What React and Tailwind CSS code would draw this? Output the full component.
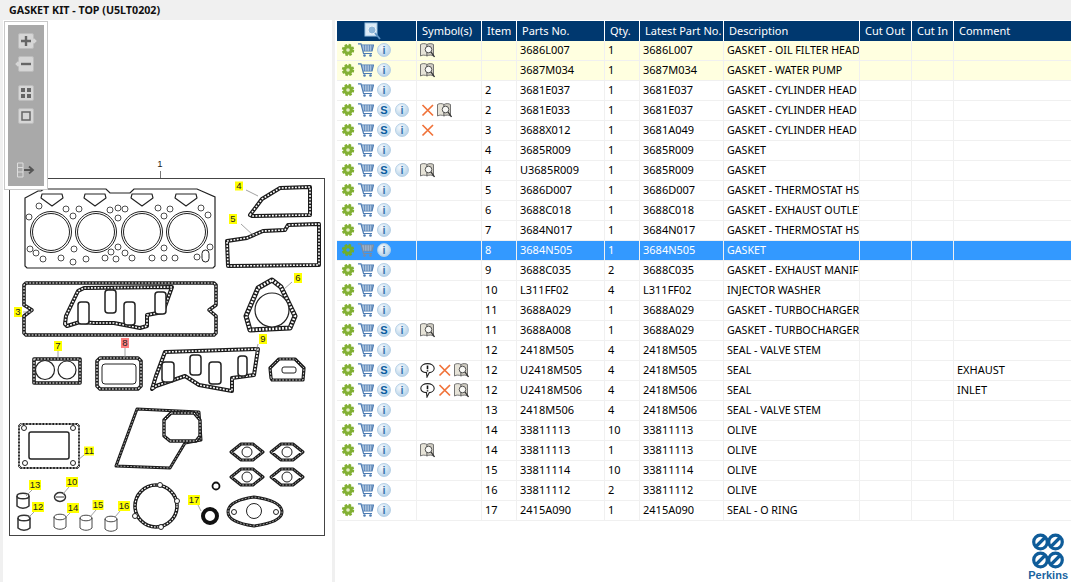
import React from "react";

const rows = [
  { s: 0, sym: ["book"], item: "", part: "3686L007", qty: "1", latest: "3686L007", desc: "GASKET - OIL FILTER HEAD", hl: true },
  { s: 0, sym: ["book"], item: "", part: "3687M034", qty: "1", latest: "3687M034", desc: "GASKET - WATER PUMP", hl: true },
  { s: 0, sym: [], item: "2", part: "3681E037", qty: "1", latest: "3681E037", desc: "GASKET - CYLINDER HEAD" },
  { s: 1, sym: ["x", "book"], item: "2", part: "3681E033", qty: "1", latest: "3681E037", desc: "GASKET - CYLINDER HEAD" },
  { s: 1, sym: ["x"], item: "3", part: "3688X012", qty: "1", latest: "3681A049", desc: "GASKET - CYLINDER HEAD" },
  { s: 0, sym: [], item: "4", part: "3685R009", qty: "1", latest: "3685R009", desc: "GASKET" },
  { s: 1, sym: ["book"], item: "4", part: "U3685R009", qty: "1", latest: "3685R009", desc: "GASKET" },
  { s: 0, sym: [], item: "5", part: "3686D007", qty: "1", latest: "3686D007", desc: "GASKET - THERMOSTAT HSG" },
  { s: 0, sym: [], item: "6", part: "3688C018", qty: "1", latest: "3688C018", desc: "GASKET - EXHAUST OUTLET" },
  { s: 0, sym: [], item: "7", part: "3684N017", qty: "1", latest: "3684N017", desc: "GASKET - THERMOSTAT HSG" },
  { s: 0, sym: [], item: "8", part: "3684N505", qty: "1", latest: "3684N505", desc: "GASKET", sel: true },
  { s: 0, sym: [], item: "9", part: "3688C035", qty: "2", latest: "3688C035", desc: "GASKET - EXHAUST MANIFOLD" },
  { s: 0, sym: [], item: "10", part: "L311FF02", qty: "4", latest: "L311FF02", desc: "INJECTOR WASHER" },
  { s: 0, sym: [], item: "11", part: "3688A029", qty: "1", latest: "3688A029", desc: "GASKET - TURBOCHARGER" },
  { s: 1, sym: ["book"], item: "11", part: "3688A008", qty: "1", latest: "3688A029", desc: "GASKET - TURBOCHARGER" },
  { s: 0, sym: [], item: "12", part: "2418M505", qty: "4", latest: "2418M505", desc: "SEAL - VALVE STEM" },
  { s: 1, sym: ["note", "x", "book"], item: "12", part: "U2418M505", qty: "4", latest: "2418M505", desc: "SEAL", comment: "EXHAUST" },
  { s: 1, sym: ["note", "x", "book"], item: "12", part: "U2418M506", qty: "4", latest: "2418M506", desc: "SEAL", comment: "INLET" },
  { s: 0, sym: [], item: "13", part: "2418M506", qty: "4", latest: "2418M506", desc: "SEAL - VALVE STEM" },
  { s: 0, sym: [], item: "14", part: "33811113", qty: "10", latest: "33811113", desc: "OLIVE" },
  { s: 0, sym: ["book"], item: "14", part: "33811113", qty: "1", latest: "33811113", desc: "OLIVE" },
  { s: 0, sym: [], item: "15", part: "33811114", qty: "10", latest: "33811114", desc: "OLIVE" },
  { s: 0, sym: [], item: "16", part: "33811112", qty: "2", latest: "33811112", desc: "OLIVE" },
  { s: 0, sym: [], item: "17", part: "2415A090", qty: "1", latest: "2415A090", desc: "SEAL - O RING" },
];

const labels = [
  ["4", 239, 186, 8, 9], ["5", 233, 219, 8, 10], ["6", 298, 278, 8, 10], ["3", 18, 312, 8, 10],
  ["7", 58, 346, 8, 10], ["8", 125, 343, 8, 10], ["9", 263, 339, 8, 10], ["11", 89, 451, 10, 9],
  ["13", 35, 485, 12, 10], ["10", 72, 482, 12, 10], ["12", 38, 507, 12, 10], ["14", 73, 508, 12, 10],
  ["15", 98, 505, 11, 10], ["16", 124, 506, 12, 10], ["17", 194, 500, 12, 10],
];

const leaders = [
  "M246 190L258 196", "M241 224L254 236", "M292 282L283 290", "M23 312L32 312", "M58 351V358", "M125 348V358",
  "M258 344L256 352", "M84 455L78 460", "M32 490L26 496", "M69 487L63 494", "M34 512L28 518", "M70 513L65 518",
  "M96 510L90 517", "M120 511L115 517", "M198 505L201 511",
];

function Gear({ sel }) {
  const c = sel ? "#6fae2e" : "#82b034";
  return (
    <svg width="14" height="14" viewBox="0 0 14 14" className="shrink-0">
      <circle cx="7" cy="7" r="5" fill="none" stroke={c} strokeWidth="2.400" strokeDasharray="2.400 1.530" />
      <circle cx="7" cy="7" r="4.800" fill={c} />
      <circle cx="7" cy="7" r="1.800" fill={sel ? "#3399ff" : "#e4eec4"} />
    </svg>
  );
}

function Cart({ sel }) {
  const c = sel ? "#7d8ca0" : "#4d7cb3";
  return (
    <svg width="16" height="14" viewBox="0 0 16 14" className="shrink-0" fill="none">
      <path d="M3.500 2H15.500L14 8H5Z" fill={sel ? "#a9c4e0" : "#dbe6f2"} />
      <path d="M6.500 2V8M9 2V8M11.500 2V8M13.800 2V8M4 4H15M4.500 6H14.500" stroke={c} strokeWidth="0.700" />
      <path d="M0 0.800H3L5.500 10.500H14M3.500 2H15.500L14 8H5" stroke={c} strokeWidth="1.200" />
      <circle cx="6.500" cy="12.500" r="1.300" fill={c} />
      <circle cx="12.500" cy="12.500" r="1.300" fill={c} />
    </svg>
  );
}

function Round({ children, color }) {
  return (
    <span className="w-[14px] h-[14px] shrink-0 rounded-full bg-[radial-gradient(circle_at_35%_30%,#f6fafd,#a5c8e4)] border border-[#b5d0e6] flex items-center justify-center font-bold text-[11px] leading-none [font-family:'Liberation_Sans',sans-serif]" style={{ color }}>
      {children}
    </span>
  );
}

function Book() {
  return (
    <svg width="15" height="15" viewBox="0 0 15 15" className="shrink-0" fill="none">
      <path d="M0.500 1.500C2.500 0.300 5 0.300 7 1.500V13C5 11.800 2.500 11.800 0.500 13Z" fill="#e6e3d8" stroke="#666" strokeWidth="0.900" />
      <path d="M7 1.500C9 0.300 11.500 0.300 13.500 1.500V13C11.500 11.800 9 11.800 7 13Z" fill="#cfccc2" stroke="#666" strokeWidth="0.900" />
      <circle cx="8.500" cy="6.500" r="3.300" fill="#f8f8f5" stroke="#444" strokeWidth="0.900" />
      <path d="M11 9L14.500 14" stroke="#333" strokeWidth="1.300" />
    </svg>
  );
}

function Cross() {
  return (
    <svg width="15" height="15" viewBox="0 0 15 15" className="shrink-0" fill="none">
      <path d="M2.500 2L13 12.500M13 2L2.500 12.500" stroke="#f0733a" strokeWidth="1.700" />
    </svg>
  );
}

function Note() {
  return (
    <svg width="15" height="15" viewBox="0 0 15 15" className="shrink-0" fill="none">
      <path d="M7.500 0.600C11 0.600 14.200 2.400 14.200 5.200C14.200 8 11.500 9.500 9.300 9.600L7 14L6.500 9.600C3.700 9.400 0.800 8 0.800 5.200C0.800 2.400 4 0.600 7.500 0.600Z" fill="#fff" stroke="#222" strokeWidth="1.100" />
      <path d="M7.500 2.600V6.200M7.500 7.200V8.600" stroke="#111" strokeWidth="1.600" />
    </svg>
  );
}

function ToolBtn({ children, className, notch }) {
  return (
    <span className={"relative w-4 h-4 ml-[10px] flex items-center justify-center rounded-[2px] border border-[#bdbdbd] bg-[#d6d6d6] " + (className || "")}>
      {children}
      {notch === "right" && <span className="absolute right-[-3px] top-[5px] w-[4px] h-[4px] rotate-45 bg-[#d6d6d6]" />}
      {notch === "left" && <span className="absolute left-[-3px] top-[5px] w-[4px] h-[4px] rotate-45 bg-[#d6d6d6]" />}
    </span>
  );
}

function Gasket({ d, w = 3.6, fill = "none" }) {
  return (
    <g fill={fill} strokeLinejoin="round">
      <path d={d} stroke="#1c1c1c" strokeWidth={w} />
      <path d={d} stroke="#fff" strokeWidth={w - 2.400} strokeDasharray="1.800 1.500" fill="none" />
    </g>
  );
}

function Diagram() {
  const headHoles = [
    [39, 206], [29, 217], [66, 209], [79, 209], [73, 216], [110, 210], [118, 208], [125, 209], [118, 218],
    [158, 208], [170, 209], [164, 216], [201, 208], [208, 215], [30, 249], [36, 253], [43, 259], [61, 258], [73, 262],
    [74, 249], [86, 259], [105, 258], [111, 252], [116, 259], [118, 247], [125, 253], [132, 258], [152, 258], [164, 258], [175, 258],
    [164, 248], [197, 257], [210, 247],
  ];
  const diamonds = [[247, 452], [287, 452], [247, 477], [287, 477]];
  const corners = [[24, 428], [73, 428], [25, 463], [73, 463]];
  return (
    <svg viewBox="3 20 329 562" width="329" height="562" className="block" fill="none">
      <rect x="9.500" y="178.500" width="315" height="357" stroke="#444" />
      <path d="M160.500 171V178" stroke="#777" />
      <text x="160" y="167" textAnchor="middle" fontSize="9.500" fill="#222" fontFamily="Liberation Sans, sans-serif">1</text>

      {/* head gasket */}
      <path d="M25 198L38 191H41L44 189H106L110 193H130L134 189H197L215 197V266L213 268H27L25 266Z" stroke="#222" strokeWidth="1.200" />
      {[[51, 232], [96, 232], [142, 232], [187, 232]].map(([x, y]) => (
        <g key={x} stroke="#222">
          <circle cx={x} cy={y} r="20.500" strokeWidth="1" />
          <circle cx={x} cy={y} r="18.500" strokeWidth="1" />
        </g>
      ))}
      {[52, 95, 142, 186].map((x) => (
        <path key={x} d={`M${x - 10} 194H${x + 10}L${x + 11} 198L${x} 206L${x - 11} 198Z`} stroke="#222" strokeWidth="1.100" strokeLinejoin="round" />
      ))}
      {headHoles.map(([x, y]) => (
        <circle key={x + "-" + y} cx={x} cy={y} r="3" stroke="#222" strokeWidth="0.800" />
      ))}
      <rect x="202" y="250" width="7" height="12" rx="3.500" stroke="#222" />

      {/* 3 */}
      <Gasket d="M26 283H214L216 285V305L209 310L216 316V333L214 335H26L24 333V316L32 310L24 305V285Z" />
      <Gasket d="M65 324L66 316L78 291L84 288L172 287L163 312L147 315L147 326L140 328L114 323L94 323L80 322L67 326Z" w={4} />
      {[[78, 302, 11, 22], [105, 290, 11, 23], [124, 302, 11, 23], [155, 292, 11, 22]].map(([x, y, w, h]) => (
        <rect key={x} x={x} y={y} width={w} height={h} rx="3" stroke="#222" strokeWidth="1.500" fill="#fff" />
      ))}

      {/* 4, 5, 6 */}
      <Gasket d="M250 215L262 199L280 188L310 187V215L252 216Z" w={4} />
      <Gasket d="M227 241L247 238L263 231L285 230L288 225L319 224V265L228 266Z" w={4} />
      <Gasket d="M272 280L281 287L295 316L290 328L250 330L246 316L258 288Z" w={5} />
      <circle cx="272" cy="310" r="17" stroke="#222" strokeWidth="1.200" fill="#fff" />

      {/* 7, 8, 9, small flange */}
      <Gasket d="M34 359H80V383H34Z" w={3.600} />
      <circle cx="45" cy="370" r="9.500" stroke="#222" strokeWidth="1.200" fill="#fff" />
      <circle cx="67" cy="370" r="9" stroke="#222" strokeWidth="1.200" fill="#fff" />
      <Gasket d="M100 358H138L141 361V386L138 389H100L97 386V361Z" />
      <rect x="102" y="364" width="34" height="20" rx="3" stroke="#222" />
      <Gasket d="M152 389L156 376L165 352L258 349L254 375L232 378L232 391L199 385L185 376L156 386Z" w={4} />
      {[[162, 362, 12, 20], [190, 355, 11, 20], [209, 362, 12, 22], [238, 356, 9, 20]].map(([x, y, w, h]) => (
        <rect key={x} x={x} y={y} width={w} height={h} rx="3" stroke="#222" strokeWidth="1.500" fill="#fff" />
      ))}
      <Gasket d="M271 378L270 368L279 359H295L304 368L303 380H272Z" w={3.200} />
      <rect x="282" y="367" width="14" height="6" rx="2" stroke="#222" fill="#fff" />

      {/* 11 and big turbo gasket */}
      <Gasket d="M21 424H77L79 426V466L77 468H21L19 466V426Z" w={1.800} />
      <rect x="29" y="432" width="40" height="27" rx="2" stroke="#222" strokeWidth="1.500" />
      {corners.map(([x, y]) => (
        <circle key={x + "-" + y} cx={x} cy={y} r="2.500" stroke="#222" fill="#fff" />
      ))}
      <Gasket d="M116 466L137 409L199 412L201 440L185 443L170 468Z" w={3} />
      <Gasket d="M171 413H194L200 420V436L196 441H170L164 436V420Z" w={3.400} fill="#fff" />

      {/* diamonds */}
      {diamonds.map(([x, y]) => (
        <g key={x + "-" + y}>
          <Gasket d={`M${x - 16} ${y}L${x - 6} ${y - 8}H${x + 6}L${x + 16} ${y}L${x + 6} ${y + 8}H${x - 6}Z`} w={3} />
          <circle cx={x} cy={y} r="5" stroke="#222" fill="#fff" />
        </g>
      ))}

      {/* flange, round gasket, o rings */}
      <Gasket d="M228 512C228 503 240 499 254 497C268 499 282 503 282 512C282 520 268 524 254 526C240 524 228 520 228 512Z" w={3} />
      <circle cx="254" cy="511" r="7.500" stroke="#222" fill="#fff" />
      <circle cx="234" cy="512" r="2.500" stroke="#222" />
      <circle cx="276" cy="512" r="2.500" stroke="#222" />
      <circle cx="156" cy="506" r="21" stroke="#1c1c1c" strokeWidth="3.600" />
      <circle cx="156" cy="506" r="21" stroke="#fff" strokeWidth="1.200" strokeDasharray="1.800 1.500" />
      {[[160, 485], [177, 501], [135, 516], [161, 527]].map(([x, y]) => (
        <circle key={x} cx={x} cy={y} r="2.500" stroke="#222" fill="#fff" />
      ))}
      <circle cx="216" cy="486" r="3.500" stroke="#111" strokeWidth="1.800" />
      <circle cx="210" cy="516" r="7" stroke="#111" strokeWidth="4" />

      {/* seals and olives */}
      {[[23, 501, 1], [24, 523, 1], [60, 522, 0], [86, 523, 0], [111, 524, 0]].map(([x, y, dark]) => (
        <g key={x} stroke="#333" strokeWidth={dark ? 1.500 : 0.900}>
          <path d={`M${x - 6} ${y - 5}V${y + 5}C${x - 3} ${y + 8} ${x + 3} ${y + 8} ${x + 6} ${y + 5}V${y - 5}`} />
          <ellipse cx={x} cy={y - 5} rx="6" ry="2.800" />
        </g>
      ))}
      <ellipse cx="60" cy="497" rx="5.500" ry="4.500" stroke="#333" strokeWidth="1.500" />
      <path d="M56 497H64" stroke="#333" />

      {leaders.map((d) => (
        <path key={d} d={d} stroke="#8a8a8a" strokeWidth="0.800" />
      ))}
      {labels.map(([t, x, y, w, h]) => (
        <g key={t + x}>
          <rect x={x - w / 2} y={y - h / 2} width={w} height={h} fill={t === "8" ? "#ff8080" : "#ffff00"} />
          <text x={x} y={y + 3.300} textAnchor="middle" fontSize="9.500" fill="#222" fontFamily="Liberation Sans, sans-serif">{t}</text>
        </g>
      ))}
    </svg>
  );
}

function Logo() {
  const c = "#0f5c99";
  return (
    <div className="self-end mr-[3px] flex flex-col items-center">
      <svg width="34" height="36" viewBox="0 0 34 36" fill="none">
        {[[9.500, 9], [24.500, 9], [9.500, 27], [24.500, 27]].map(([x, y]) => (
          <g key={x + "-" + y} stroke={c} strokeWidth="3.200">
            <circle cx={x} cy={y} r="6.800" />
            <path d={`M${x - 4.500} ${y + 4.500}L${x + 4.500} ${y - 4.500}`} />
          </g>
        ))}
      </svg>
      <span className="text-[11px] leading-[13px] font-bold text-[#1a649f] [font-family:'Liberation_Sans',sans-serif]">Perkins</span>
    </div>
  );
}

export default function App() {
  const cell = "p-0 border-b border-r border-[#f0f0f0]";
  return (
    <div className="w-[1071px] h-[582px] overflow-hidden bg-[#f0f0f0] flex flex-col text-[11px] text-black [font-family:'Noto_Sans',sans-serif]">
      <div className="h-5 shrink-0 pl-[9px] font-bold text-[10.700px] leading-5 text-[#111]">GASKET KIT - TOP (U5LT0202)</div>
      <div className="flex flex-1 min-h-0">
        <div className="relative ml-[3px] w-[329px] bg-white">
          <Diagram />
          <div className="absolute left-[1px] top-[1px] w-[44px] h-[169px] border border-[#c8c8c8] bg-white p-[3px]">
            <div className="h-full bg-[#a9a9a9] flex flex-col pt-[8px]">
              <ToolBtn notch="right">
                <svg width="12" height="12" viewBox="0 0 12 12"><path d="M6 1V11M1 6H11" stroke="#666" strokeWidth="2.400" /></svg>
              </ToolBtn>
              <ToolBtn notch="left" className="mt-[7px]">
                <svg width="12" height="12" viewBox="0 0 12 12"><path d="M1 6H11" stroke="#666" strokeWidth="2.400" /></svg>
              </ToolBtn>
              <ToolBtn className="mt-[13px]">
                <svg width="12" height="12" viewBox="0 0 12 12" fill="#666"><rect x="1" y="1" width="4" height="4" /><rect x="7" y="1" width="4" height="4" /><rect x="1" y="7" width="4" height="4" /><rect x="7" y="7" width="4" height="4" /></svg>
              </ToolBtn>
              <ToolBtn className="mt-[7px]">
                <svg width="12" height="12" viewBox="0 0 12 12" fill="none"><rect x="2" y="2" width="8" height="8" stroke="#666" strokeWidth="1.500" /></svg>
              </ToolBtn>
              <span className="mt-[38px] ml-[9px] w-[18px] h-4 flex">
                <svg width="18" height="16" viewBox="0 0 18 16" fill="none">
                  <path d="M0.500 1H6V15H0.500ZM0.500 5.500H6M0.500 10H6" stroke="#ddd" />
                  <path d="M7 8H15M12 4.500L16 8L12 11.500" stroke="#555" strokeWidth="1.800" />
                </svg>
              </span>
            </div>
          </div>
        </div>
        <div className="ml-[3px] flex-1 bg-white pt-[1px] pl-[2px] flex flex-col">
          <table className="table-fixed w-[734px] border-separate border-spacing-0">
            <colgroup>
              <col className="w-[80px]" /><col className="w-[65px]" /><col className="w-[35px]" /><col className="w-[88px]" /><col className="w-[35px]" />
              <col className="w-[84px]" /><col className="w-[136px]" /><col className="w-[52px]" /><col className="w-[42px]" /><col className="w-[117px]" />
            </colgroup>
            <thead>
              <tr className="h-5 bg-[#00386f] text-white text-left">
                <th className="p-0 pl-[27px] border-r border-white font-normal">
                  <span className="flex">
                    <svg width="17" height="18" viewBox="0 0 17 18" fill="none">
                      <rect x="1" y="1" width="12" height="13" fill="#dcebf7" stroke="#9cc3e3" />
                      <circle cx="8" cy="8" r="4" fill="#8fb6d8" stroke="#eaf3fa" />
                      <path d="M11 11L16 17" stroke="#5d93c4" strokeWidth="1.800" />
                    </svg>
                  </span>
                </th>
                {["Symbol(s)", "Item", "Parts No.", "Qty.", "Latest Part No.", "Description", "Cut Out", "Cut In", "Comment"].map((h) => (
                  <th key={h} className="p-0 pl-[5px] border-r border-white font-normal whitespace-nowrap overflow-hidden last:border-r-0">{h}</th>
                ))}
              </tr>
            </thead>
            <tbody>
              {rows.map((r, i) => (
                <tr key={i} className={"h-5 " + (r.sel ? "bg-[#3399ff] text-white" : r.hl ? "bg-[#ffffe0]" : "bg-white")}>
                  <td className={cell}>
                    <div className="flex items-center pl-[4px] pb-[1px]">
                      <Gear sel={r.sel} />
                      <span className="ml-[3px]"><Cart sel={r.sel} /></span>
                      {r.s ? (
                        <>
                          <span className="ml-[3px]"><Round color="#0b5c9e">S</Round></span>
                          <span className="ml-[4px]"><Round color="#3a78b0">i</Round></span>
                        </>
                      ) : (
                        <span className="ml-[3px]"><Round color="#3a78b0">i</Round></span>
                      )}
                    </div>
                  </td>
                  <td className={cell}>
                    <div className="flex items-center pl-[3px] gap-[2px]">
                      {r.sym.map((s, j) => (
                        <React.Fragment key={j}>
                          {s === "book" && <Book />}
                          {s === "x" && <Cross />}
                          {s === "note" && <Note />}
                        </React.Fragment>
                      ))}
                    </div>
                  </td>
                  <td className={cell + " pl-[3px]"}>{r.item}</td>
                  <td className={cell + " pl-[3px]"}>{r.part}</td>
                  <td className={cell + " pl-[3px]"}>{r.qty}</td>
                  <td className={cell + " pl-[3px]"}>{r.latest}</td>
                  <td className={cell + " pl-[3px] text-[10.700px] whitespace-nowrap overflow-hidden"}>{r.desc}</td>
                  <td className={cell}></td>
                  <td className={cell}></td>
                  <td className={cell + " pl-[3px] border-r-0"}>{r.comment}</td>
                </tr>
              ))}
            </tbody>
          </table>
          <div className="mt-auto flex flex-col"><Logo /></div>
        </div>
      </div>
    </div>
  );
}
